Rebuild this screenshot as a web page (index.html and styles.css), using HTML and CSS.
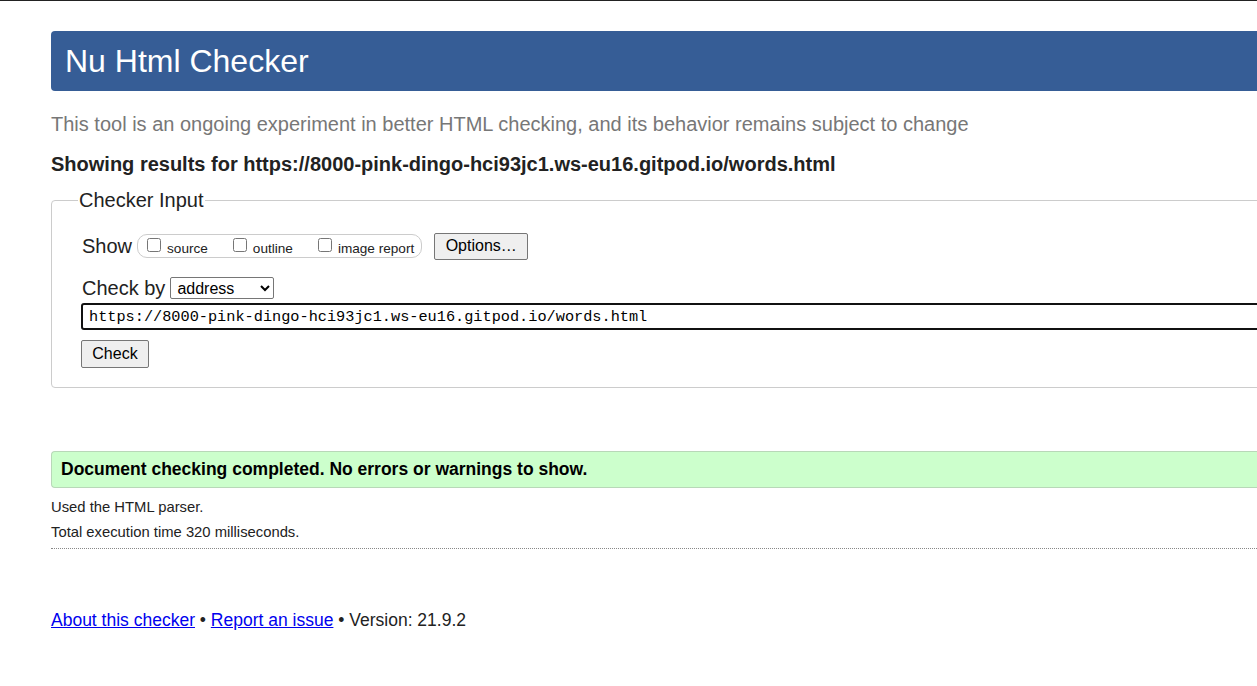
FILE: index.html
```html
<!DOCTYPE html>
<html lang="en">
<head>
<meta charset="utf-8">
<title>Nu Html Checker</title>
<link rel="stylesheet" href="styles.css">
</head>
<body>
<div class="topline"></div>
<div class="page">
  <h1 class="banner">Nu Html Checker</h1>
  <p class="tagline">This tool is an ongoing experiment in better HTML checking, and its behavior remains subject to change</p>
  <p class="showing">Showing results for https://8000-pink-dingo-hci93jc1.ws-eu16.gitpod.io/words.html</p>
  <form class="checker">
    <fieldset class="box">
      <legend class="legend">Checker Input</legend>
      <div class="row show-row">
        <span class="lbl">Show</span>
        <span class="opts">
          <label class="opt"><input type="checkbox" class="cb"><span>source</span></label>
          <label class="opt"><input type="checkbox" class="cb"><span>outline</span></label>
          <label class="opt"><input type="checkbox" class="cb"><span>image report</span></label>
        </span>
        <button type="button" class="btn options">Options…</button>
      </div>
      <div class="row by-row">
        <span class="lbl">Check by</span>
        <select class="sel"><option>address</option></select>
      </div>
      <input class="url" type="text" value="https://8000-pink-dingo-hci93jc1.ws-eu16.gitpod.io/words.html">
      <button type="button" class="btn check">Check</button>
    </fieldset>
  </form>
  <p class="success">Document checking completed. No errors or warnings to show.</p>
  <p class="details">Used the HTML parser.</p>
  <p class="details last">Total execution time 320 milliseconds.</p>
  <p class="footer"><a href="#">About this checker</a> • <a href="#">Report an issue</a> • Version: 21.9.2</p>
</div>
</body>
</html>
```

FILE: styles.css
```css
html, body {
  margin: 0;
  padding: 0;
  overflow: hidden;
  background: #fff;
}
body {
  font-family: "Liberation Sans", Arial, sans-serif;
  color: #222;
  width: 1257px;
  height: 686px;
}
.topline {
  height: 1px;
  background: #222;
}
.page {
  margin-left: 51px;
  width: 1240px;
}
.banner {
  margin: 30px 0 0 0;
  height: 60px;
  line-height: 60px;
  padding-left: 14px;
  background: #365d96;
  color: #fff;
  font-size: 32px;
  font-weight: normal;
  border-radius: 4px 0 0 4px;
}
.tagline {
  margin: 21px 0 0 0;
  font-size: 20px;
  line-height: 24px;
  color: #777;
}
.showing {
  margin: 16px 0 0 0;
  font-size: 20px;
  line-height: 24px;
  font-weight: bold;
  color: #222;
}
.checker {
  margin: 13px 0 0 0;
}
.box {
  margin: 0;
  border: 1px solid #ccc;
  border-radius: 4px;
  padding: 20px 0 19px 30px;
  min-width: 0;
}
.legend {
  font-size: 20px;
  padding: 0 1px;
  margin-left: -4px;
  color: #222;
}
.row {
  display: flex;
  align-items: center;
}
.lbl {
  font-size: 20px;
}
.show-row {
  height: 28px;
}
.opts {
  display: inline-flex;
  align-items: center;
  box-sizing: border-box;
  margin-left: 5px;
  height: 24px;
  border: 1px solid #ccc;
  border-radius: 10px;
  padding: 0 7px 0 9px;
}
.opt {
  display: inline-flex;
  align-items: center;
  font-size: 13.6px;
  margin-right: 25px;
}
.opt:last-child {
  margin-right: 0;
}
.opt span {
  margin-top: 5px;
}
.cb {
  width: 14px;
  height: 14px;
  margin: 0 6px 0 0;
  position: relative;
  top: -1px;
}
.btn {
  font-family: "Liberation Sans", Arial, sans-serif;
  font-size: 16px;
  color: #000;
  background: #efefef;
  border: 1px solid #767676;
  border-radius: 2px;
  padding: 0;
}
.options {
  margin-left: 12px;
  width: 94px;
  height: 27px;
}
.by-row {
  margin-top: 15px;
  height: 26px;
}
.sel {
  margin-left: 5px;
  width: 104px;
  height: 22px;
  font-family: "Liberation Sans", Arial, sans-serif;
  font-size: 16px;
  color: #000;
  border: 1px solid #767676;
  border-radius: 2px;
  background: #fff;
  padding: 0 0 0 2px;
}
.url {
  display: block;
  box-sizing: border-box;
  margin: 2px 0 0 -1px;
  width: 1300px;
  height: 27px;
  border: 2px solid #111;
  border-radius: 3px;
  padding: 0 0 0 6px;
  font-family: "Liberation Mono", "Courier New", monospace;
  font-size: 15.25px;
  color: #000;
  outline: none;
}
.check {
  display: block;
  margin: 10px 0 0 -1px;
  width: 68px;
  height: 28px;
}
.success {
  margin: 63px 0 0 0;
  height: 35px;
  line-height: 35px;
  padding-left: 9px;
  background: #ccffcc;
  border: 1px solid #b8d8b8;
  border-right: none;
  border-radius: 4px 0 0 4px;
  font-weight: bold;
  font-size: 17.5px;
  color: #000;
}
.details {
  margin: 11px 0 0 0;
  font-size: 14.8px;
  line-height: 17px;
  color: #222;
}
.details + .details {
  margin-top: 8px;
}
.last {
  padding-bottom: 7px;
  border-bottom: 1px dotted #888;
}
.footer {
  margin: 60px 0 0 0;
  font-size: 17.5px;
  line-height: 22px;
  color: #222;
}
.footer a {
  color: #00e;
}
```
